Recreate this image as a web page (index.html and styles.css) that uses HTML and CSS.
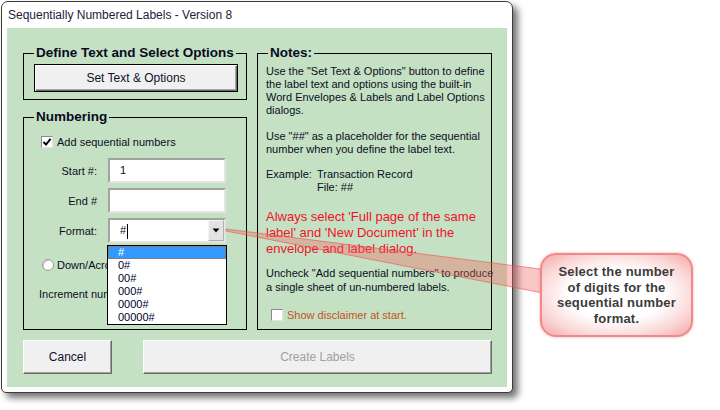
FILE: index.html
```html
<!DOCTYPE html>
<html lang="en">
  <head>
    <meta charset="UTF-8" />
    <title>Sequentially Numbered Labels - Version 8</title>
    <link rel="stylesheet" href="styles.css">
  </head>
  <body>
    <div class="window">
      <div class="titlebar">Sequentially Numbered Labels - Version 8</div>
      <div class="client">
        <div class="columns">
          <div class="left-col">
            <fieldset class="group group-define">
              <legend>Define Text and Select Options</legend>
              <button class="btn btn-default">Set Text &amp; Options</button>
            </fieldset>
            <fieldset class="group group-numbering">
              <legend>Numbering</legend>
              <label class="check-row">
                <span class="checkbox">
                  <svg width="10" height="10" viewBox="0 0 10 10"><path d="M1.5 5 L4 7.6 L8.6 1.8" fill="none" stroke="#000" stroke-width="1.9"/></svg>
                </span>
                Add sequential numbers
              </label>
              <div class="field-grid">
                <span class="field-label">Start #:</span>
                <div class="textbox">1</div>
                <span class="field-label">End #</span>
                <div class="textbox"></div>
                <span class="field-label">Format:</span>
                <div class="combo-wrap">
                  <div class="textbox combo">
                    <span class="combo-text">#<span class="caret"></span></span>
                    <span class="combo-btn">
                      <svg width="8" height="5" viewBox="0 0 8 5"><path d="M0.5 0.5 H7.5 L4 4.5 Z" fill="#000"/></svg>
                    </span>
                  </div>
                  <ul class="combo-list">
                    <li class="selected">#</li>
                    <li>0#</li>
                    <li>00#</li>
                    <li>000#</li>
                    <li>0000#</li>
                    <li>00000#</li>
                  </ul>
                </div>
              </div>
              <label class="radio-row"><span class="radio"></span>Down/Across</label>
              <div class="increment-row">Increment number:</div>
            </fieldset>
          </div>
          <fieldset class="group group-notes">
            <legend>Notes:</legend>
            <p>Use the "Set Text &amp; Options" button to define<br>the label text and options using the built-in<br>Word Envelopes &amp; Labels and Label Options<br>dialogs.</p>
            <p class="gap-small">Use "##" as a placeholder for the sequential<br>number when you define the label text.</p>
            <div class="example">
              <span>Example:</span>
              <span>Transaction Record<br>File: ##</span>
            </div>
            <p class="warning">Always select 'Full page of the same<br>label' and 'New Document' in the<br>envelope and label dialog.</p>
            <p class="uncheck">Uncheck "Add sequential numbers" to produce<br>a single sheet of un-numbered labels.</p>
            <label class="disclaimer"><span class="checkbox"></span>Show disclaimer at start.</label>
          </fieldset>
        </div>
        <div class="actions">
          <button class="btn btn-cancel">Cancel</button>
          <button class="btn btn-create" disabled>Create Labels</button>
        </div>
      </div>
    </div>

    <svg class="pointer" width="720" height="410" viewBox="0 0 720 410">
      <polygon points="226,229 548,270 548,294 226,231" fill="rgba(242,96,96,0.36)" stroke="rgba(236,80,80,0.6)" stroke-width="1"/>
    </svg>
    <div class="callout">Select the number<br>of digits for the<br>sequential number<br>format.</div>
  </body>
</html>
```

FILE: styles.css
```css
* {
  box-sizing: border-box;
}
body {
  margin: 0;
  width: 720px;
  height: 410px;
  overflow: hidden;
  position: relative;
  background: #fff;
  font-family: "Liberation Sans", Arial, sans-serif;
  color: #0c0c24;
}
.window {
  margin: 1px 0 0 1px;
  width: 512px;
  border: 1px solid #3a3a3a;
  border-radius: 7px 7px 5px 5px;
  background: #fff;
  box-shadow: 5px 5px 7px rgba(0, 0, 0, 0.55);
}
.titlebar {
  height: 26px;
  line-height: 26px;
  padding-left: 6px;
  font-size: 12px;
  color: #1c1c3c;
}
.client {
  margin: 0 5px 5px;
  background: #c4e2c3;
  padding: 17px 15px 13px 16px;
}
.columns {
  display: grid;
  grid-template-columns: 224px 235px;
  column-gap: 10px;
}
.group {
  margin: 0;
  min-width: 0;
  border: 1px solid #000;
}
.group legend {
  font-weight: bold;
  font-size: 13.5px;
  line-height: 16px;
  padding: 0 2px;
  color: #0a0a22;
}
.group-define {
  padding: 3px 8px 7px 10px;
}
.group-numbering {
  margin-top: 9px;
  padding: 0 8px 28px 10px;
  font-size: 11px;
}
.group-notes {
  padding: 4px 4px 0 8px;
  font-size: 11px;
  line-height: 13px;
}
.group-notes legend {
  margin-left: 2px;
}

/* buttons */
.btn {
  font-family: inherit;
  font-size: 12px;
  color: #10102c;
  background: #f0f0f0;
  border: 1px solid;
  border-color: #fff #6a6a6a #6a6a6a #fff;
  box-shadow: inset -1px -1px #a0a0a0;
  padding: 0;
}
.btn-default {
  display: block;
  width: 100%;
  height: 28px;
  border-color: #000;
  box-shadow: inset 1px 1px #fff, inset -1px -1px #6a6a6a, inset -2px -2px #a8a8a8;
}
.actions {
  display: flex;
  gap: 31px;
  margin-top: 10px;
}
.btn-cancel {
  width: 89px;
  height: 34px;
}
.btn-create {
  width: 349px;
  height: 34px;
  color: #a0a0a0;
}

/* numbering */
.checkbox {
  width: 12px;
  height: 12px;
  flex: none;
  display: inline-flex;
  align-items: center;
  justify-content: center;
  background: #fff;
  border: 1px solid;
  border-color: #8a8a8a #e2e2e2 #e2e2e2 #8a8a8a;
}
.check-row {
  display: flex;
  align-items: center;
  gap: 4px;
  height: 14px;
  margin: 10px 0 0 7px;
}
.field-grid {
  display: grid;
  grid-template-columns: 63px 118px;
  column-gap: 11px;
  row-gap: 5px;
  align-items: center;
  margin-top: 9px;
}
.field-label {
  text-align: right;
}
.textbox {
  height: 25px;
  background: #fff;
  border: 2px solid;
  border-color: #a2a2a2 #e4e4e4 #e4e4e4 #a2a2a2;
  padding-left: 10px;
  line-height: 21px;
}
.combo-wrap {
  position: relative;
}
.combo {
  display: flex;
  align-items: center;
  padding-right: 0;
}
.combo-text {
  flex: 1;
}
.caret {
  display: inline-block;
  width: 1px;
  height: 15px;
  margin-left: 1px;
  background: #000;
  vertical-align: middle;
}
.combo-btn {
  width: 16px;
  height: 21px;
  display: flex;
  align-items: center;
  justify-content: center;
  background: #e3e3e3;
  border: 1px solid;
  border-color: #f4f4f4 #b0b0b0 #b0b0b0 #f4f4f4;
}
.combo-list {
  position: absolute;
  z-index: 2;
  top: calc(100% + 2px);
  left: -1px;
  width: 120px;
  margin: 0;
  padding: 0;
  list-style: none;
  background: #fff;
  border: 1px solid #000;
}
.combo-list li {
  height: 13px;
  line-height: 13px;
  padding-left: 10px;
  color: #00002c;
}
.combo-list li.selected {
  background: #3399ff;
  color: #fff;
  outline: 1px dotted #b8681c;
  outline-offset: -1px;
}
.radio-row {
  display: flex;
  align-items: center;
  gap: 3px;
  height: 14px;
  margin: 15px 0 0 8px;
}
.radio {
  width: 12px;
  height: 12px;
  border-radius: 50%;
  background: #fff;
  border: 1px solid #9a9a9a;
  box-shadow: inset 1px 1px #d0d0d0;
}
.increment-row {
  height: 14px;
  line-height: 14px;
  margin: 15px 0 0 5px;
}

/* notes */
.group-notes p {
  margin: 0 0 13px;
  white-space: nowrap;
}
.group-notes p.gap-small {
  margin-bottom: 12px;
}
.example {
  display: grid;
  grid-template-columns: 51px auto;
}
.group-notes p.warning {
  margin: 15px 0 0;
  font-size: 13px;
  line-height: 16px;
  color: #f0102c;
}
.group-notes p.uncheck {
  margin: 9px 0 0;
  line-height: 14px;
}
.disclaimer {
  display: flex;
  align-items: center;
  gap: 4px;
  height: 14px;
  margin: 14px 0 0 5px;
  color: #c4511e;
}

/* annotation */
.pointer {
  position: absolute;
  left: 0;
  top: 0;
  z-index: 3;
  pointer-events: none;
}
.callout {
  position: absolute;
  z-index: 4;
  left: 540px;
  top: 253px;
  width: 153px;
  height: 84px;
  display: flex;
  align-items: center;
  justify-content: center;
  text-align: center;
  font-weight: bold;
  font-size: 13px;
  line-height: 15.5px;
  letter-spacing: 0.2px;
  color: #3c3c3c;
  border: 2px solid #f08a8a;
  border-radius: 16px;
  background: radial-gradient(ellipse at 50% 50%, #fff 45%, #fbd6d6 75%, #f4a6a6 100%);
  box-shadow: 0 0 3px rgba(240, 120, 120, 0.6);
}
```
